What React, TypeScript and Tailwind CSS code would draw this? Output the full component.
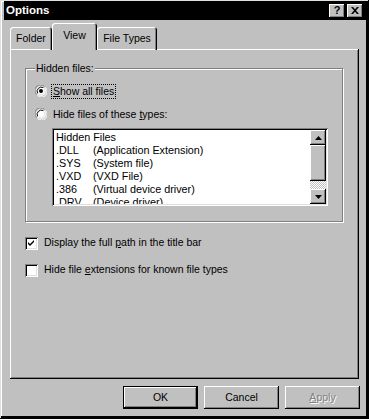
import React from 'react'

const font = { fontFamily: '"Liberation Sans", Arial, sans-serif' }

const raised =
  'shadow-[inset_-1px_-1px_0_#000,inset_1px_1px_0_#fff,inset_-2px_-2px_0_#808080]'
const sunken =
  'shadow-[inset_1px_1px_0_#808080,inset_-1px_-1px_0_#fff,inset_2px_2px_0_#000,inset_-2px_-2px_0_#dfdfdf]'

function Radio({ checked }: { checked?: boolean }) {
  return (
    <svg width="12" height="12" viewBox="0 0 12 12" className="shrink-0">
      <circle cx="6" cy="6" r="5" fill="#fff" />
      <path d="M1.5 9.5 A5.5 5.5 0 0 1 9.5 1.5" fill="none" stroke="#808080" strokeWidth="1" />
      <path d="M2.6 8.4 A4.3 4.3 0 0 1 8.4 2.6" fill="none" stroke="#000" strokeWidth="1" />
      <path d="M10.5 2.5 A5.5 5.5 0 0 1 2.5 10.5" fill="none" stroke="#fff" strokeWidth="1" />
      <path d="M9.4 3.6 A4.3 4.3 0 0 1 3.6 9.4" fill="none" stroke="#dfdfdf" strokeWidth="1" />
      {checked && <circle cx="6" cy="6" r="2" fill="#000" />}
    </svg>
  )
}

function Check({ checked }: { checked?: boolean }) {
  return (
    <div className={`w-[13px] h-[13px] bg-white shrink-0 flex items-center justify-center ${sunken}`}>
      {checked && (
        <svg width="7" height="7" viewBox="0 0 7 7">
          <path d="M0 2 L2 4 L6 0 L6 2 L2 6 L0 4 Z" fill="#000" />
        </svg>
      )}
    </div>
  )
}

function Button({ label, def, disabled }: { label: React.ReactNode; def?: boolean; disabled?: boolean }) {
  return (
    <div
      className={`w-[75px] h-[23px] flex items-center justify-center text-[10.5px] ${
        def
          ? 'shadow-[inset_0_0_0_1px_#000,inset_-2px_-2px_0_#000,inset_2px_2px_0_#fff,inset_-3px_-3px_0_#808080]'
          : raised
      } ${disabled ? 'text-[#808080] [text-shadow:1px_1px_0_#fff]' : 'text-black'}`}
    >
      {label}
    </div>
  )
}

const files = [
  ['.DLL', '(Application Extension)'],
  ['.SYS', '(System file)'],
  ['.VXD', '(VXD File)'],
  ['.386', '(Virtual device driver)'],
  ['.DRV', '(Device driver)'],
]

export default function App() {
  return (
    <div
      style={font}
      className="w-[369px] h-[419px] bg-[#c0c0c0] flex flex-col pt-[1px] px-[3px] shadow-[inset_-1px_-1px_0_#000,inset_1px_1px_0_#dfdfdf,inset_-3px_-3px_0_#000,inset_2px_2px_0_#fff] overflow-hidden select-none"
    >
      {/* Title bar */}
      <div className="h-[19px] bg-black flex items-center justify-between pl-[2px] pr-[3px] ml-[1px]">
        <span className="text-white font-bold text-[11.5px] leading-none">Options</span>
        <div className="flex gap-[2px]">
          <div className={`w-[16px] h-[14px] bg-[#c0c0c0] flex items-center justify-center ${raised}`}>
            <span className="font-bold text-[11px] leading-none text-black">?</span>
          </div>
          <div className={`w-[16px] h-[14px] bg-[#c0c0c0] flex items-center justify-center ${raised}`}>
            <svg width="8" height="7" viewBox="0 0 8 7">
              <path d="M0 0h2l2 2.3L6 0h2L5 3.5 8 7H6L4 4.7 2 7H0l3-3.5z" fill="#000" />
            </svg>
          </div>
        </div>
      </div>

      {/* Tabs */}
      <div className="ml-[7px] mt-[3px] flex items-end h-[26px] relative z-10">
        <div className="h-[23px] w-[42px] mb-[-1px] rounded-t-[3px] shadow-[inset_1px_1px_0_#fff,inset_-1px_0_0_#000,inset_-2px_0_0_#808080] flex items-center justify-center text-[10.5px] pt-[1px]">
          Folder
        </div>
        <div className="h-[27px] w-[45px] mb-[-1px] rounded-t-[3px] bg-[#c0c0c0] shadow-[inset_1px_1px_0_#fff,inset_-1px_0_0_#000,inset_-2px_0_0_#808080] flex items-start justify-center text-[10.5px] pt-[5px]">
          View
        </div>
        <div className="h-[23px] w-[60px] mb-[-1px] rounded-t-[3px] shadow-[inset_1px_1px_0_#fff,inset_-1px_0_0_#000,inset_-2px_0_0_#808080] flex items-center justify-center text-[10.5px] pt-[1px]">
          File Types
        </div>
      </div>

      {/* Panel */}
      <div className={`ml-[7px] w-[349px] h-[330px] ${raised} pt-[13px] pl-[15px] text-[10.5px]`}>
        <fieldset className="w-[318px] h-[160px] border border-[#808080] shadow-[inset_1px_1px_0_#fff,1px_1px_0_#fff] px-[9px] pt-0 m-0">
          <legend className="px-[1px] ml-[0px] bg-[#c0c0c0] relative leading-[13px]">Hidden files:</legend>
          <div className="flex items-center gap-[5px] mt-[9px] h-[14px]">
            <Radio checked />
            <span className="outline outline-1 outline-dotted outline-black px-[1px] leading-[13px]">
              <u>S</u>how all files
            </span>
          </div>
          <div className="flex items-center gap-[5px] mt-[9px] h-[14px]">
            <Radio />
            <span className="px-[1px] leading-[13px]">
              Hide files of these <u>t</u>ypes:
            </span>
          </div>
          <div className={`ml-[17px] mt-[7px] w-[276px] h-[78px] bg-white flex p-[2px] ${sunken}`}>
            <div className="flex-1 overflow-hidden pl-[2px] text-[10.8px] leading-[13px] pt-[1px]">
              <div>Hidden Files</div>
              {files.map(([ext, desc]) => (
                <div key={ext} className="flex">
                  <span className="w-[37px]">{ext}</span>
                  <span>{desc}</span>
                </div>
              ))}
            </div>
            <div className="w-[16px] flex flex-col bg-[#c0c0c0]">
              <div className={`h-[15px] flex items-center justify-center bg-[#c0c0c0] ${raised}`}>
                <svg width="7" height="4" viewBox="0 0 7 4">
                  <path d="M3.5 0L7 4H0z" fill="#000" />
                </svg>
              </div>
              <div className={`h-[36px] bg-[#c0c0c0] ${raised}`} />
              <div className="flex-1 bg-[repeating-conic-gradient(#fff_0_25%,#c0c0c0_0_50%)] bg-[length:2px_2px]" />
              <div className={`h-[15px] flex items-center justify-center bg-[#c0c0c0] ${raised}`}>
                <svg width="7" height="4" viewBox="0 0 7 4">
                  <path d="M0 0h7L3.5 4z" fill="#000" />
                </svg>
              </div>
            </div>
          </div>
        </fieldset>

        <div className="flex items-center gap-[6px] mt-[14px] h-[14px]">
          <Check checked />
          <span>
            Display the full <u>p</u>ath in the title bar
          </span>
        </div>
        <div className="flex items-center gap-[6px] mt-[13px] h-[14px]">
          <Check />
          <span>
            Hide file <u>e</u>xtensions for known file types
          </span>
        </div>
      </div>

      {/* Buttons */}
      <div className="flex justify-end gap-[6px] mt-[7px] mr-[6px]">
        <Button label="OK" def />
        <Button label="Cancel" />
        <Button
          label={
            <span>
              <u>A</u>pply
            </span>
          }
          disabled
        />
      </div>
    </div>
  )
}
